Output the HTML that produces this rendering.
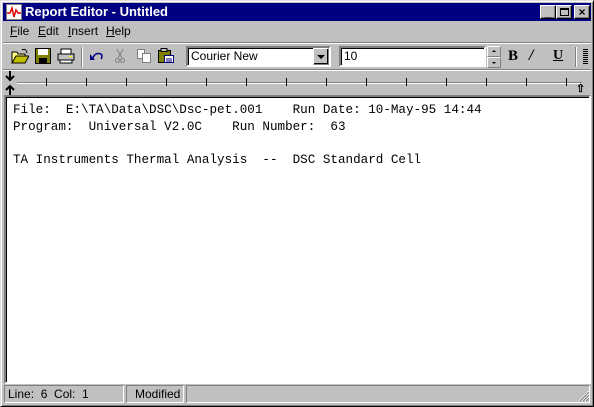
<!DOCTYPE html>
<html><head><style>
*{margin:0;padding:0;box-sizing:border-box}
body{width:594px;height:407px;background:#c0c0c0;position:relative;overflow:hidden;font-family:"Liberation Sans",sans-serif;font-size:12px;color:#000}
.a{position:absolute}
.win{left:0;top:0;width:594px;height:407px;border:1px solid;border-color:#dfdfdf #000 #000 #dfdfdf;box-shadow:inset 1px 1px #fff,inset -1px -1px #808080}
.title{left:3px;top:3px;width:588px;height:18px;background:#000080;color:#fff;font-weight:bold;font-size:13px;line-height:18px;padding-left:22px}
.tb{top:5px;width:16px;height:14px;background:#c0c0c0;border:1px solid;border-color:#fff #000 #000 #fff;box-shadow:inset -1px -1px #808080;font-size:12px;line-height:12px;text-align:center;font-weight:bold}
.menu span{position:absolute;top:24px}
.raised{border:1px solid;border-color:#fff #808080 #808080 #fff}
.box{background:#fff;border:2px solid;border-color:#808080 #fff #fff #808080;box-shadow:inset 1px 1px #000}
.tick{width:1px;height:8px;background:#000;top:78px}
.txt{font-family:"Liberation Mono",monospace;font-size:12.6px;line-height:16.5px;white-space:pre;letter-spacing:0}
.st{top:385px;height:18px;border:1px solid;border-color:#808080 #fff #fff #808080;line-height:16px;padding-left:3px}
</style></head><body>
<div class="a win"></div>
<div class="a title">Report Editor - Untitled</div>
<svg class="a" style="left:6px;top:4px" width="16" height="16"><rect x="0.5" y="0.5" width="15" height="15" fill="#fff" stroke="#808080"/><polyline points="1,9 4,9 6,4 8,13 10,6 12,9 15,9" fill="none" stroke="#e00000" stroke-width="1.5"/></svg>
<div class="a tb" style="left:540px">_</div>
<div class="a tb" style="left:556px"><div style="width:9px;height:8px;border:1px solid #000;border-top-width:2px;margin:2px auto"></div></div>
<div class="a tb" style="left:574px">×</div>
<div class="menu"><span style="left:10px"><u>F</u>ile</span><span style="left:38px"><u>E</u>dit</span><span style="left:68px"><u>I</u>nsert</span><span style="left:106px"><u>H</u>elp</span></div>
<div class="a" style="left:3px;top:42px;width:588px;height:2px;border-top:1px solid #808080;border-bottom:1px solid #fff"></div>
<svg class="a" style="left:11px;top:48px" width="18" height="16"><path d="M1 4h5l1 2h7v9H1z" fill="#ffff80" stroke="#000"/><path d="M1 15l4-7h13l-4 7z" fill="#c0c000" stroke="#000"/><path d="M11 2q4-2 5 3" fill="none" stroke="#000"/></svg>
<svg class="a" style="left:35px;top:48px" width="16" height="16"><rect x="0.5" y="0.5" width="15" height="15" fill="#808000" stroke="#000"/><rect x="3" y="1" width="10" height="6" fill="#fff"/><rect x="4" y="10" width="8" height="5" fill="#000"/></svg>
<svg class="a" style="left:57px;top:48px" width="18" height="16"><rect x="4" y="1" width="10" height="5" fill="#fff" stroke="#000"/><rect x="1" y="6" width="16" height="6" fill="#c0c0c0" stroke="#000"/><rect x="3" y="12" width="12" height="3" fill="#fff" stroke="#000"/><rect x="12" y="8" width="3" height="1" fill="#ff0"/></svg>
<div class="a" style="left:81px;top:47px;width:2px;height:20px;border-left:1px solid #808080;border-right:1px solid #fff"></div>
<svg class="a" style="left:90px;top:50px" width="14" height="12"><path d="M3 8q2-6 8-4q2 2 0 5" fill="none" stroke="#000080" stroke-width="1.5"/><path d="M0 4l5 6h-5z" fill="#000080"/></svg>
<svg class="a" style="left:115px;top:48px" width="10" height="16" stroke="#808080" fill="none"><path d="M2 1l5 9M8 1l-5 9"/><circle cx="2.5" cy="12.5" r="2"/><circle cx="7.5" cy="12.5" r="2"/></svg>
<svg class="a" style="left:136px;top:48px" width="16" height="16" stroke="#808080" fill="#fff"><rect x="1.5" y="1.5" width="7" height="9"/><rect x="6.5" y="5.5" width="8" height="9"/></svg>
<svg class="a" style="left:157px;top:47px" width="18" height="17"><rect x="1.5" y="3.5" width="12" height="12" fill="#808000" stroke="#000"/><rect x="4" y="1.5" width="6" height="3" fill="#c0c0c0" stroke="#000"/><rect x="7.5" y="8.5" width="9" height="7" fill="#fff" stroke="#000080"/><path d="M9 12h6M9 14h6" stroke="#000080"/></svg>
<div class="a box" style="left:186px;top:46px;width:145px;height:21px;padding:1px 3px;font-size:12px;line-height:15px">Courier New</div>
<div class="a raised" style="left:313px;top:48px;width:16px;height:17px;background:#c0c0c0;box-shadow:inset -1px -1px #000"><div style="margin:6px auto 0;width:0;height:0;border:4px solid transparent;border-top:4px solid #000;border-bottom:0"></div></div>
<div class="a box" style="left:339px;top:46px;width:147px;height:21px;padding:1px 3px;font-size:12px;line-height:15px">10</div>
<div class="a raised" style="left:487px;top:46px;width:14px;height:11px;background:#c0c0c0"><div style="margin:3px auto 0;width:0;border:2px solid transparent;border-bottom-color:#000;border-top:0"></div></div>
<div class="a raised" style="left:487px;top:57px;width:14px;height:11px;background:#c0c0c0"><div style="margin:4px auto 0;width:0;border:2px solid transparent;border-top-color:#000;border-bottom:0"></div></div>
<div class="a" style="left:508px;top:48px;font:bold 15px 'Liberation Serif',serif">B</div>
<div class="a" style="left:529px;top:47px;font:bold italic 16px 'Liberation Serif',serif">/</div>
<div class="a" style="left:553px;top:48px;font:bold 14px 'Liberation Serif',serif;text-decoration:underline">U</div>
<div class="a" style="left:575px;top:47px;width:2px;height:20px;border-left:1px solid #808080;border-right:1px solid #fff"></div>
<div class="a" style="left:583px;top:49px;width:5px;height:15px;background:repeating-linear-gradient(#000 0 1px,#c0c0c0 1px 2px)"></div>
<div class="a" style="left:3px;top:69px;width:588px;height:2px;border-top:1px solid #808080;border-bottom:1px solid #fff"></div>
<div class="a" style="left:17px;top:82px;width:565px;height:2px;border-top:1px solid #808080;border-bottom:1px solid #fff"></div>
<svg class="a" style="left:5px;top:71px" width="10" height="24" stroke="#000" stroke-width="2" fill="none"><path d="M5 0v9M1 5l4 4 4-4M5 24v-9M1 19l4-4 4 4"/></svg>
<div class="a" style="left:576px;top:84px;font-size:11px;line-height:11px;font-weight:bold">⇧</div>
<div class="a tick" style="left:46px"></div><div class="a tick" style="left:86px"></div><div class="a tick" style="left:126px"></div><div class="a tick" style="left:166px"></div><div class="a tick" style="left:206px"></div><div class="a tick" style="left:246px"></div><div class="a tick" style="left:286px"></div><div class="a tick" style="left:326px"></div><div class="a tick" style="left:366px"></div><div class="a tick" style="left:406px"></div><div class="a tick" style="left:446px"></div><div class="a tick" style="left:486px"></div><div class="a tick" style="left:526px"></div><div class="a tick" style="left:566px"></div>
<div class="a box" style="left:4px;top:95px;width:587px;height:289px;padding:5px 7px">
<div class="txt">File:  E:\TA\Data\DSC\Dsc-pet.001    Run Date: 10-May-95 14:44
Program:  Universal V2.0C    Run Number:  63

TA Instruments Thermal Analysis  --  DSC Standard Cell</div></div>
<div class="a st" style="left:4px;width:120px">Line:&nbsp; 6 &nbsp;Col:&nbsp; 1</div>
<div class="a st" style="left:126px;width:58px;padding-left:8px">Modified</div>
<div class="a st" style="left:186px;width:404px"></div>
<svg class="a" style="left:578px;top:390px" width="12" height="12"><path d="M11 1L1 11M11 4L4 11M11 7L7 11" stroke="#fff"/><path d="M11 2L2 11M11 5L5 11M11 8L8 11" stroke="#808080"/></svg>
</body></html>
